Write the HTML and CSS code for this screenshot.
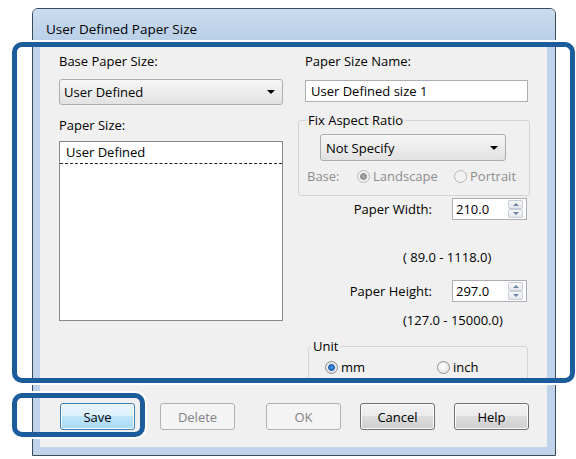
FILE: index.html
```html
<!DOCTYPE html>
<html lang="en">
<head>
    <meta charset="UTF-8">
    <meta name="viewport" content="width=device-width, initial-scale=1.0">
    <title>User Defined Paper Size</title>
    <link rel="stylesheet" href="styles.css">
</head>
<body>
    <div class="stage">
        <div class="window">
            <div class="titlebar">User Defined Paper Size</div>
            <div class="frame">
                <div class="content">
                    <div class="main">
                        <div class="col-left">
                            <div class="label">Base Paper Size:</div>
                            <div class="combo combo-base"><span>User Defined</span><span class="arrow"></span></div>
                            <div class="label label-list">Paper Size:</div>
                            <div class="listbox">
                                <div class="list-item">User Defined</div>
                            </div>
                        </div>

                        <div class="col-right">
                            <div class="label indent">Paper Size Name:</div>
                            <div class="textbox">User Defined size 1</div>

                            <fieldset class="group group-aspect">
                                <legend>Fix Aspect Ratio</legend>
                                <div class="combo combo-aspect"><span>Not Specify</span><span class="arrow"></span></div>
                                <div class="base-row">
                                    <span class="base-label">Base:</span>
                                    <span class="radio-opt opt-landscape"><span class="radio checked"></span>Landscape</span>
                                    <span class="radio-opt"><span class="radio"></span>Portrait</span>
                                </div>
                            </fieldset>

                            <div class="size-row row-width">
                                <span>Paper Width:</span>
                                <div class="spin">
                                    <span class="spin-value">210.0</span>
                                    <span class="spin-btns"><i class="spin-up"></i><i class="spin-down"></i></span>
                                </div>
                            </div>
                            <div class="range range-width">( 89.0 - 1118.0)</div>

                            <div class="size-row row-height">
                                <span>Paper Height:</span>
                                <div class="spin">
                                    <span class="spin-value">297.0</span>
                                    <span class="spin-btns"><i class="spin-up"></i><i class="spin-down"></i></span>
                                </div>
                            </div>
                            <div class="range range-height">(127.0 - 15000.0)</div>

                            <fieldset class="group group-unit">
                                <legend>Unit</legend>
                                <div class="unit-row">
                                    <span class="radio-opt opt-mm"><span class="radio checked"></span>mm</span>
                                    <span class="radio-opt"><span class="radio"></span>inch</span>
                                </div>
                            </fieldset>
                        </div>
                    </div>

                    <div class="buttons">
                        <div class="btn-group">
                            <button class="btn btn-default">Save</button>
                            <button class="btn" disabled>Delete</button>
                        </div>
                        <div class="btn-group">
                            <button class="btn" disabled>OK</button>
                            <button class="btn">Cancel</button>
                            <button class="btn">Help</button>
                        </div>
                    </div>
                </div>
            </div>
        </div>

        <!-- callouts drawn over the dialog -->
        <div class="callout callout-fields"></div>
        <div class="callout callout-save"></div>
    </div>
</body>
</html>
```

FILE: styles.css
```css
body {
    margin: 0;
    background: #fff;
    font-family: 'Open Sans', 'Noto Sans', sans-serif;
    font-size: 13px;
    color: #000;
}
.stage {
    position: relative;
    width: 576px;
    height: 459px;
    overflow: hidden;
}
.window {
    margin: 8px 0 0 32px;
    width: 524px;
    box-sizing: border-box;
    border: 1px solid #3d4b59;
    border-radius: 6px 6px 0 0;
    background: #c0d5ec;
}
.titlebar {
    height: 31px;
    box-sizing: border-box;
    padding: 10px 0 0 13px;
    line-height: 20px;
    font-size: 13.5px;
    background: linear-gradient(#cadcef, #b9d0e8);
    border-radius: 5px 5px 0 0;
}
.frame {
    padding: 0 8px 8px 7px;
    background: #bfd4eb;
}
.content {
    height: 407px;
    box-sizing: border-box;
    padding: 12px 0 0 19px;
    background: #f0f0f0;
}
.main {
    display: flex;
    gap: 15px;
    height: 333px;
}
.col-left {
    width: 224px;
}
.col-right {
    width: 232px;
}
.label {
    line-height: 18px;
}
.label.indent {
    margin-left: 7px;
}
.label-list {
    margin-top: 11px;
}

/* combo boxes */
.combo {
    display: flex;
    align-items: center;
    justify-content: space-between;
    box-sizing: border-box;
    border: 1px solid #acacac;
    border-radius: 3px;
    background: linear-gradient(#f6f6f6, #e2e2e2);
    padding: 0 7px 0 4px;
}
.combo-base {
    margin-top: 9px;
    height: 26px;
}
.combo-aspect {
    margin-left: 21px;
    width: 186px;
    height: 27px;
    padding-left: 5px;
}
.arrow {
    width: 0;
    height: 0;
    border-left: 4px solid transparent;
    border-right: 4px solid transparent;
    border-top: 4px solid #000;
}

.listbox {
    margin-top: 7px;
    height: 180px;
    box-sizing: border-box;
    border: 1px solid #828790;
    background: #fff;
}
.list-item {
    height: 22px;
    box-sizing: border-box;
    padding-left: 6px;
    line-height: 21px;
    border-bottom: 1px dashed #222;
}

.textbox {
    margin: 10px 0 0 7px;
    width: 223px;
    height: 22px;
    box-sizing: border-box;
    border: 1px solid #abadb3;
    background: #fff;
    padding-left: 5px;
    line-height: 20px;
}

/* group boxes */
.group {
    margin: 0;
    box-sizing: border-box;
    border: 1px solid #d5d5d5;
    border-radius: 3px;
    min-width: 0;
}
.group legend {
    padding: 0 2px;
    line-height: 16px;
}
.group-aspect {
    margin-top: 10px;
    width: 232px;
    padding: 6px 0 9px 0;
}
.group-aspect legend {
    margin-left: 7px;
}
.group-unit {
    margin: 9px 0 0 10px;
    width: 220px;
    padding: 4px 0 8px 0;
}
.group-unit legend {
    margin-left: 2px;
}
.base-row {
    display: flex;
    align-items: center;
    height: 20px;
    margin-top: 5px;
    padding-left: 8px;
    color: #8d8d8d;
}
.base-label {
    width: 50px;
}
.opt-landscape {
    width: 97px;
}
.unit-row {
    display: flex;
    align-items: center;
    height: 18px;
    padding-left: 16px;
}
.opt-mm {
    width: 112px;
}
.radio-opt {
    display: flex;
    align-items: center;
}
.radio {
    width: 13px;
    height: 13px;
    box-sizing: border-box;
    border-radius: 50%;
    border: 1px solid #8e8f8f;
    background: radial-gradient(circle at 40% 40%, #fff, #dcdcdc);
    margin-right: 3px;
}
.radio.checked {
    background: radial-gradient(circle, #4a9be6 0, #1a5fb4 3px, #eaeaea 3.8px, #dcdcdc 100%);
}
.base-row .radio {
    border-color: #b8b8b8;
    background: #f2f2f2;
}
.base-row .radio.checked {
    background: radial-gradient(circle, #b0b0b0 0, #8c8c8c 3px, #f2f2f2 3.8px, #e8e8e8 100%);
}

/* width / height fields */
.size-row {
    display: flex;
    justify-content: flex-end;
    align-items: center;
    gap: 20px;
    padding-right: 3px;
    height: 22px;
}
.row-width {
    margin-top: 2px;
}
.row-height {
    margin-top: 14px;
}
.spin {
    display: flex;
    align-items: center;
    width: 75px;
    height: 22px;
    box-sizing: border-box;
    border: 1px solid #abadb3;
    background: #fff;
}
.spin-value {
    padding-left: 3px;
}
.spin-btns {
    display: flex;
    flex-direction: column;
    margin-left: auto;
    margin-right: 3px;
    width: 15px;
    height: 18px;
}
.spin-btns i {
    flex: 1;
    display: flex;
    align-items: center;
    justify-content: center;
    border: 1px solid #c8ced6;
    border-radius: 2px;
    background: linear-gradient(#f7f7f7, #e4e8ee);
}
.spin-up::before {
    content: '';
    border-left: 3px solid transparent;
    border-right: 3px solid transparent;
    border-bottom: 3px solid #6d85a1;
}
.spin-down::before {
    content: '';
    border-left: 3px solid transparent;
    border-right: 3px solid transparent;
    border-top: 3px solid #6d85a1;
}
.range {
    padding-left: 105px;
    line-height: 18px;
}
.range-width {
    margin-top: 28px;
}
.range-height {
    margin-top: 9px;
}

/* bottom buttons */
.buttons {
    display: flex;
    justify-content: space-between;
    margin: 18px 0 0 1px;
    padding-right: 18px;
}
.btn-group {
    display: flex;
    gap: 25px;
}
.btn-group + .btn-group {
    gap: 19px;
}
.btn {
    width: 75px;
    height: 27px;
    padding: 0;
    border: 1px solid #707070;
    border-radius: 3px;
    background: linear-gradient(#f2f2f2 0%, #ebebeb 49%, #dddddd 50%, #cfcfcf 100%);
    box-shadow: inset 0 0 0 1px #fbfbfb;
    font-family: inherit;
    font-size: 13px;
    color: #000;
}
.btn-default {
    border-color: #3c7fb1;
    background: linear-gradient(#eaf6fd 0%, #d9f0fc 49%, #bee6fd 50%, #a7d9f5 100%);
}
.btn:disabled {
    border-color: #adb2b5;
    background: #f4f4f4;
    color: #838383;
    box-shadow: none;
}

/* callout frames over the dialog */
.callout {
    position: absolute;
    box-sizing: border-box;
    border: 5px solid #1b5d9c;
    border-radius: 10px;
    box-shadow: 0 0 0 2px #fff;
}
.callout-fields {
    left: 12px;
    top: 42px;
    width: 563px;
    height: 341px;
}
.callout-save {
    left: 12px;
    top: 393px;
    width: 133px;
    height: 44px;
}
```
